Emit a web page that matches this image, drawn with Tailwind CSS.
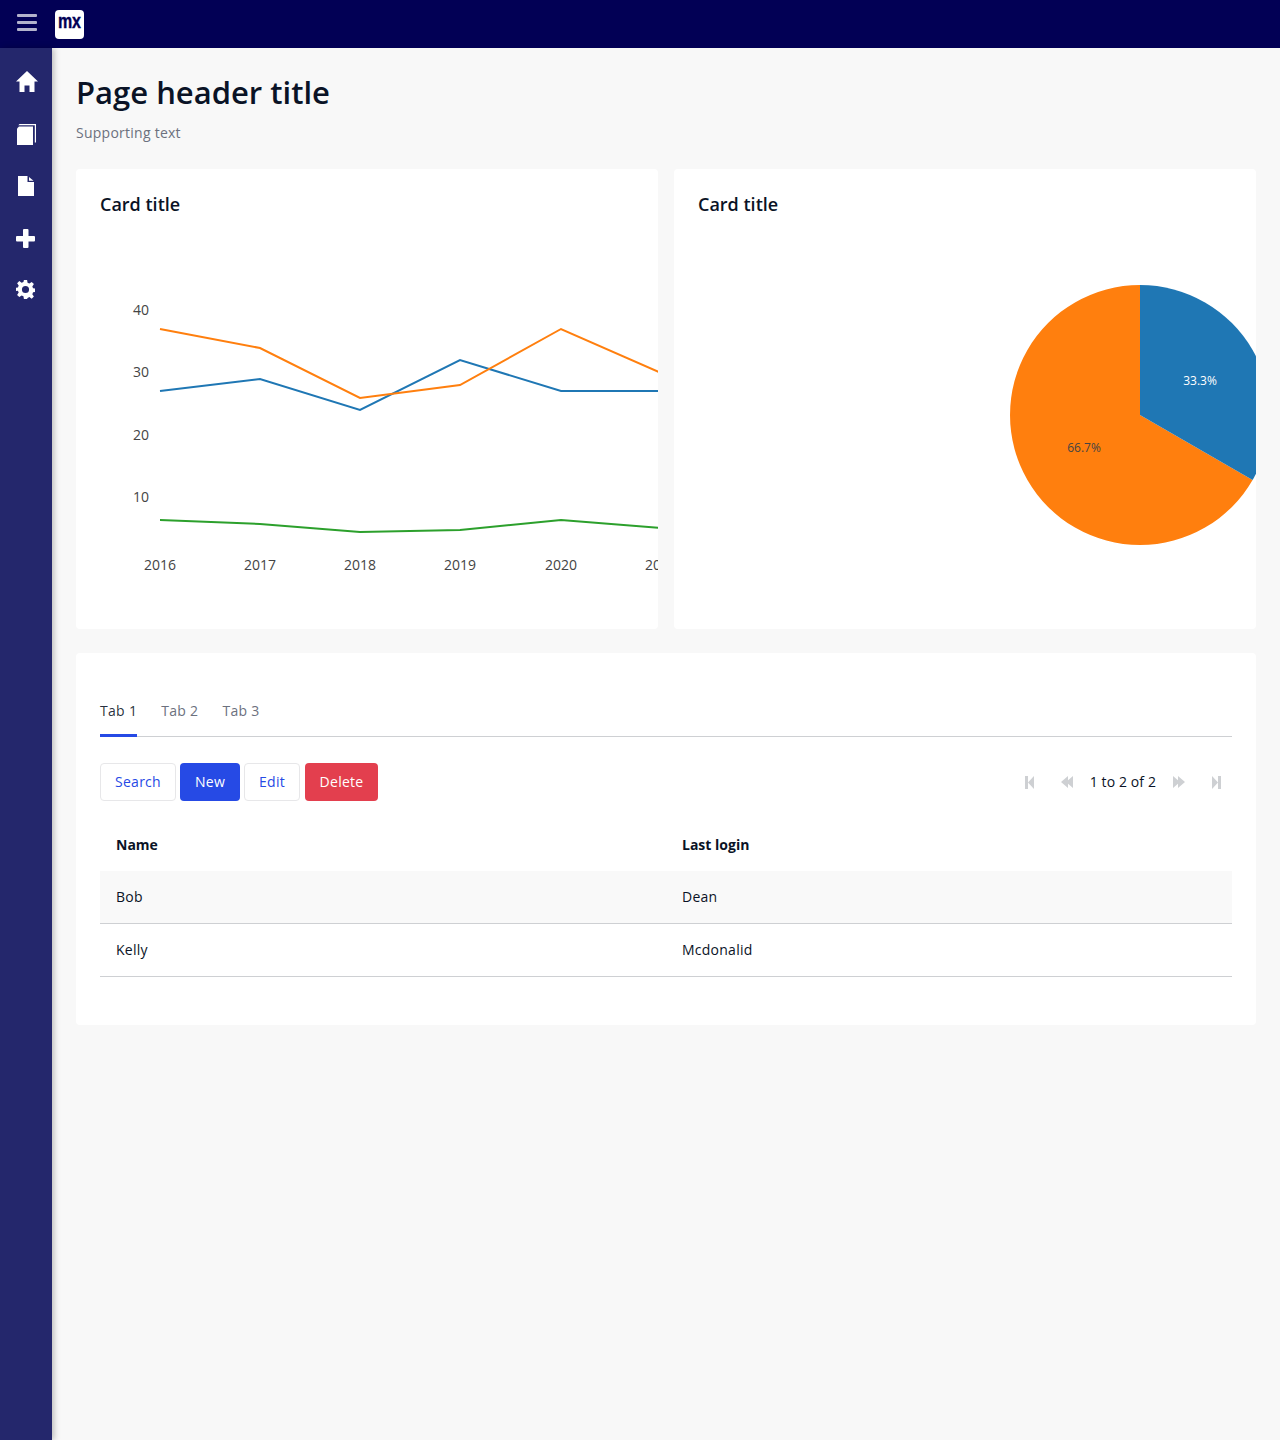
<!DOCTYPE html>
<html lang="en">
<head>
    <meta charset="UTF-8">
    <meta name="viewport" content="width=device-width, initial-scale=1.0">
    <title>Dashboard</title>
    <script src="https://cdn.jsdelivr.net/npm/@tailwindcss/browser@4"></script>
</head>
<body class="bg-[#f8f8f8] font-['Open_Sans',sans-serif] text-[#0a1326] text-sm tracking-[0.25px]">

    <div class="flex flex-col h-[1440px] overflow-hidden">

        <!-- Top bar -->
        <header class="h-12 shrink-0 bg-[#020055] flex items-center">
            <div class="w-[55px] shrink-0 flex justify-center pr-[1px] pb-[2px]">
                <svg width="20" height="18" viewBox="0 0 20 18" class="text-white/70" fill="currentColor">
                    <rect y="0" width="20" height="3" rx="1"/>
                    <rect y="7" width="20" height="3" rx="1"/>
                    <rect y="14" width="20" height="3" rx="1"/>
                </svg>
            </div>
            <div class="w-[29px] h-[29px] bg-white rounded-[4px] flex items-center justify-center">
                <span class="text-[#020055] font-['Liberation_Sans',sans-serif] font-bold text-[20px] leading-none tracking-normal scale-x-[.8] mt-[-6px] [-webkit-text-stroke:0.4px_#020055]">mx</span>
            </div>
        </header>

        <div class="flex flex-1 min-h-0">

            <!-- Sidebar -->
            <nav class="w-[52px] shrink-0 bg-[#24276c] shadow-[2px_0_6px_rgba(0,0,0,0.25)] flex flex-col items-center text-white">
                <div class="h-[52px] w-full flex items-center justify-center pt-[15px] pl-[2px]">
                    <svg width="22" height="21" viewBox="0 0 22 21" fill="currentColor"><path d="M11 0 0 10.500h3.500V21h5v-6.500h5V21h5V10.500H22z"/></svg>
                </div>
                <div class="h-[52px] w-full flex items-center justify-center pt-[16px]">
                    <svg width="20" height="21" viewBox="0 0 20 21" fill="currentColor"><path d="M3.500 0H20v18.500h-1.200V1.200H2.300z"/><path d="M3 2.500H17V21H1V4.500z"/></svg>
                </div>
                <div class="h-[52px] w-full flex items-center justify-center pt-[16px] pr-[1px]">
                    <svg width="16" height="20" viewBox="0 0 16 20" fill="currentColor"><path d="M0 0h9.500v6H16v14H0z"/><path d="M11 1 15.500 4.800H11z"/></svg>
                </div>
                <div class="h-[52px] w-full flex items-center justify-center pt-[16px] pr-[1px]">
                    <svg width="19" height="19" viewBox="0 0 19 19" fill="currentColor"><rect x="7" width="5.500" height="19" rx="1"/><rect y="7" width="19" height="5.500" rx="1"/></svg>
                </div>
                <div class="h-[52px] w-full flex items-center justify-center pt-[15px] pr-[1px]">
                    <svg width="19" height="19" viewBox="0 0 24 24" fill="currentColor"><path fill-rule="evenodd" d="M10 0h4l.6 3.400 2.300 1 2.900-2 2.800 2.800-2 2.900 1 2.300 3.400.6v4l-3.400.6-1 2.300 2 2.900-2.800 2.800-2.900-2-2.300 1L14 24h-4l-.6-3.400-2.300-1-2.900 2-2.800-2.800 2-2.900-1-2.300L-1 14v-4l3.400-.6 1-2.300-2-2.900L4.200 1.400l2.900 2 2.300-1zM12 7.500a4.500 4.500 0 1 0 0 9 4.500 4.500 0 0 0 0-9z"/></svg>
                </div>
            </nav>

            <!-- Main content -->
            <main class="flex-1 min-w-0 px-6 pt-6">
                <h1 class="text-[31px] leading-[41px] font-semibold tracking-normal">Page header title</h1>
                <p class="mt-[10px] text-[#6c717e] leading-5">Supporting text</p>

                <div class="grid grid-cols-2 gap-4 mt-[26px]">
                    <!-- Line chart card -->
                    <section class="bg-white rounded-[4px] h-[460px] overflow-hidden">
                        <h2 class="px-6 pt-[22px] text-lg leading-[26px] font-semibold tracking-normal">Card title</h2>
                        <svg width="582" height="412" viewBox="0 0 582 412" class="block text-[#444444] tracking-normal" fill="currentColor" font-size="14">
                            <g text-anchor="end">
                                <text x="73" y="98">40</text>
                                <text x="73" y="160">30</text>
                                <text x="73" y="223">20</text>
                                <text x="73" y="285">10</text>
                            </g>
                            <g text-anchor="middle">
                                <text x="84" y="353">2016</text>
                                <text x="184" y="353">2017</text>
                                <text x="284" y="353">2018</text>
                                <text x="384" y="353">2019</text>
                                <text x="485" y="353">2020</text>
                                <text x="585" y="353">2021</text>
                            </g>
                            <g fill="none" stroke-width="2">
                                <polyline stroke="#1f77b4" points="84,174 184,162 284,193 384,143 485,174 585,174"/>
                                <polyline stroke="#ff7f0e" points="84,112 184,131 284,181 384,168 485,112 585,156"/>
                                <polyline stroke="#2ca02c" points="84,303 184,307 284,315 384,313 485,303 585,311"/>
                            </g>
                        </svg>
                    </section>

                    <!-- Pie chart card -->
                    <section class="bg-white rounded-[4px] h-[460px] overflow-hidden">
                        <h2 class="px-6 pt-[22px] text-lg leading-[26px] font-semibold tracking-normal">Card title</h2>
                        <svg width="582" height="412" viewBox="0 0 582 412" class="block tracking-normal">
                            <path fill="#ff7f0e" d="M466 198 578.600 263A130 130 0 1 1 466 68z"/>
                            <path fill="#1f77b4" d="M466 198V68A130 130 0 0 1 578.600 263z"/>
                            <text x="526" y="168" text-anchor="middle" font-size="12" fill="#ffffff">33.3%</text>
                            <text x="410" y="235" text-anchor="middle" font-size="12" fill="#444444">66.7%</text>
                        </svg>
                    </section>
                </div>

                <!-- Tabs and table card -->
                <section class="bg-white rounded-[4px] mt-6 px-6 pt-[34px] pb-12">
                    <div class="flex gap-6 border-b border-[#ced0d3] h-[50px] tracking-[0.3px]">
                        <div class="relative h-[50px] flex items-center pb-[2px]">
                            <span class="text-[#0a1326]/90">Tab 1</span>
                            <span class="absolute left-0 right-0 bottom-0 h-[3px] bg-[#264ae5]"></span>
                        </div>
                        <div class="h-[50px] flex items-center pb-[2px] text-[#6c717e]">Tab 2</div>
                        <div class="h-[50px] flex items-center pb-[2px] text-[#6c717e]">Tab 3</div>
                    </div>

                    <div class="flex items-center justify-between mt-[26px]">
                        <div class="flex">
                            <button class="h-[38px] w-[76px] bg-white text-[#264ae5] border border-[#e7e7e9] rounded-[4px]">Search</button>
                            <button class="h-[38px] w-[60px] ml-1 bg-[#264ae5] text-white rounded-[4px]">New</button>
                            <button class="h-[38px] w-[56px] ml-1 bg-white text-[#264ae5] border border-[#e7e7e9] rounded-[4px]">Edit</button>
                            <button class="h-[38px] w-[73px] ml-[5px] bg-[#e33f4e] text-white rounded-[4px]">Delete</button>
                        </div>
                        <div class="flex items-center text-[#ced0d3] pr-[11px]">
                            <svg width="9" height="13" viewBox="0 0 9 13" fill="currentColor"><rect width="3" height="13"/><path d="M9 0v13L3 6.500z"/></svg>
                            <svg width="12" height="12" viewBox="0 0 12 12" fill="currentColor" class="ml-[27px]"><path d="M7 0v12L0 6zM12 0v12L5 6z"/></svg>
                            <span class="text-[#0a1326] mx-[17px] whitespace-nowrap tracking-[0.1px]">1 to 2 of 2</span>
                            <svg width="12" height="12" viewBox="0 0 12 12" fill="currentColor"><path d="M0 0v12l7-6zM5 0v12l7-6z"/></svg>
                            <svg width="9" height="13" viewBox="0 0 9 13" fill="currentColor" class="ml-[27px]"><path d="M0 0v13l6-6.500z"/><rect x="6" width="3" height="13"/></svg>
                        </div>
                    </div>

                    <table class="w-full table-fixed mt-[18px] border-collapse">
                        <thead>
                            <tr class="h-[52px]">
                                <th class="text-left font-bold px-4 tracking-normal">Name</th>
                                <th class="text-left font-bold px-4 tracking-normal">Last login</th>
                            </tr>
                        </thead>
                        <tbody>
                            <tr class="h-[52px] bg-[#f9f9f9] border-b border-[#ced0d3]">
                                <td class="px-4">Bob</td>
                                <td class="px-4">Dean</td>
                            </tr>
                            <tr class="h-[53px] border-b border-[#ced0d3]">
                                <td class="px-4">Kelly</td>
                                <td class="px-4">Mcdonalid</td>
                            </tr>
                        </tbody>
                    </table>
                </section>
            </main>
        </div>
    </div>

</body>
</html>
